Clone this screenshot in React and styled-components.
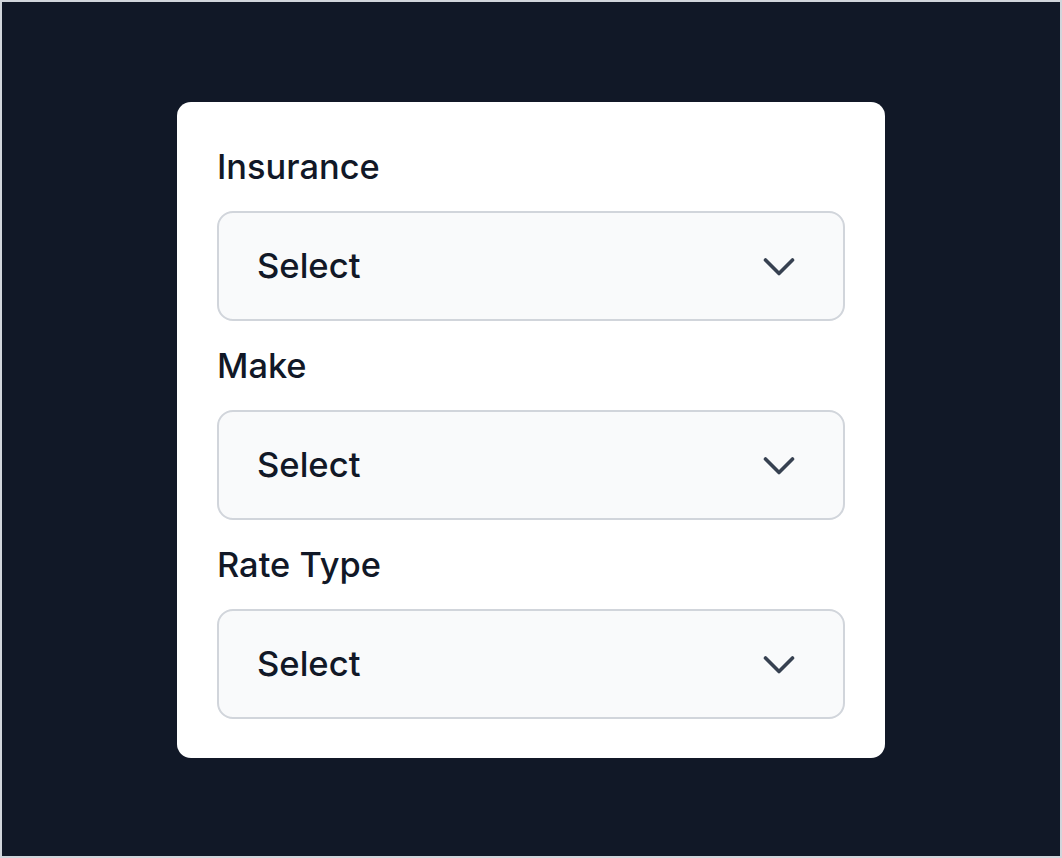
import React from 'react';
import styled, { createGlobalStyle } from 'styled-components';

const GlobalStyle = createGlobalStyle`
  html, body {
    margin: 0;
    padding: 0;
    background: #111827;
  }
  * {
    box-sizing: border-box;
  }
`;

const Page = styled.div`
  min-height: 100vh;
  border: 2px solid #d1d5db;
  display: flex;
  align-items: center;
  justify-content: center;
  font-family: Inter, "Noto Sans", sans-serif;
`;

const Card = styled.div`
  width: 708px;
  margin-top: 2px;
  background: #ffffff;
  border-radius: 14px;
  padding: 41px 40px 39px;
  display: flex;
  flex-direction: column;
  gap: 21px;
`;

const Field = styled.div`
  display: flex;
  flex-direction: column;
`;

const Label = styled.label`
  font-size: 34.4px;
  line-height: 48px;
  font-weight: 500;
  color: #111827;
  margin-bottom: 20px;
`;

const SelectBox = styled.div`
  height: 110px;
  border: 2px solid #d1d5db;
  border-radius: 16px;
  background: #f9fafb;
  display: flex;
  align-items: center;
  justify-content: space-between;
  padding: 0 48px 0 38px;
  cursor: pointer;
`;

const Value = styled.span`
  font-size: 34.6px;
  font-weight: 500;
  color: #111827;
  margin-bottom: 3px;
`;

const Chevron = () => (
  <svg width="32" height="20" viewBox="0 0 32 20" fill="none">
    <polyline
      points="2.5,4 16,17.5 29.5,4"
      stroke="#374151"
      strokeWidth="3.6"
      strokeLinecap="round"
      strokeLinejoin="round"
    />
  </svg>
);

const fields = ['Insurance', 'Make', 'Rate Type'];

export default function App() {
  return (
    <>
      <GlobalStyle />
      <Page>
        <Card>
          {fields.map((name) => (
            <Field key={name}>
              <Label>{name}</Label>
              <SelectBox>
                <Value>Select</Value>
                <Chevron />
              </SelectBox>
            </Field>
          ))}
        </Card>
      </Page>
    </>
  );
}
